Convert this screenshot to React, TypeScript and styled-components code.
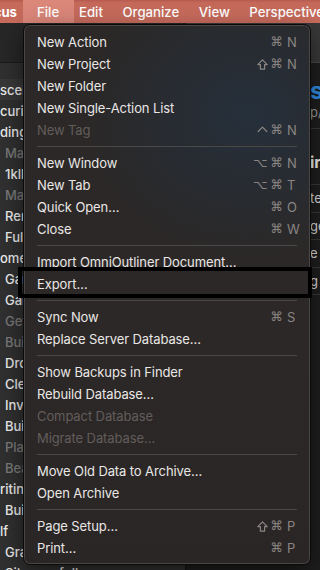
import React from "react";
import styled, { createGlobalStyle } from "styled-components";

const Global = createGlobalStyle`
  html, body { margin: 0; padding: 0; background: #1d1d1d; }
  body { width: 320px; height: 570px; overflow: hidden; }
  * { box-sizing: border-box; }
`;

const Screen = styled.div`
  position: relative;
  width: 320px;
  height: 570px;
  overflow: hidden;
  display: flex;
  flex-direction: column;
  font-family: Inter, "Liberation Sans", sans-serif;
  -webkit-font-smoothing: antialiased;
`;

const MenuBar = styled.div`
  height: 23px;
  flex: none;
  display: flex;
  align-items: center;
  background: linear-gradient(#b65a4f 0px, #c56a5b 3px, #c86c5d 100%);
  color: #fff;
  font-size: 13.2px;
  font-weight: 500;
`;

const AppName = styled.div`
  flex: none;
  width: 17px;
  height: 100%;
  display: flex;
  align-items: center;
  justify-content: flex-end;
  overflow: hidden;
  font-weight: 700;
  white-space: nowrap;
`;

const BarItem = styled.div<{ $active?: boolean; $first?: boolean }>`
  flex: none;
  height: 100%;
  display: flex;
  align-items: center;
  white-space: nowrap;
  margin-left: ${(p) => (p.$active ? 6 : p.$first ? 5 : 19.5)}px;
  ${(p) =>
    p.$active &&
    `background: #db877a; width: 51px; padding-left: 14px;`}
`;

const Window = styled.div`
  flex: 1;
  display: flex;
  min-height: 0;
`;

const Sidebar = styled.div`
  width: 186px;
  flex: none;
  display: flex;
  flex-direction: column;
  background: #303030;
  border-right: 1px solid #111;
`;

const SideToolbar = styled.div`
  height: 40px;
  flex: none;
  background: #272727;
  border-bottom: 1px solid #1a1a1a;
`;

const SideList = styled.div`
  padding-top: 16px;
  display: flex;
  flex-direction: column;
`;

const SideRow = styled.div<{ $indent: number; $dim?: boolean; $sel?: boolean }>`
  height: 21px;
  display: flex;
  align-items: center;
  padding-left: ${(p) => p.$indent}px;
  font-size: 13px;
  font-weight: 500;
  white-space: nowrap;
  color: ${(p) => (p.$dim ? "#7a7a7a" : "#ececec")};
  background: ${(p) => (p.$sel ? "#383838" : "transparent")};
`;

const Content = styled.div`
  flex: 1;
  display: flex;
  flex-direction: column;
  background: #1e1e1e;
  overflow: hidden;
  padding-left: 124px;
`;

const ContentToolbar = styled.div`
  height: 40px;
  flex: none;
  margin-left: -124px;
  background: #393939;
  border-bottom: 1px solid #4a4a4a;
`;

const TitleBlock = styled.div`
  padding: 14px 0 8px;
  border-bottom: 1px solid #3a3a3a;
  white-space: nowrap;
`;

const Title = styled.div`
  font-size: 24px;
  font-weight: 700;
  line-height: 27px;
  color: #2f8fe6;
`;

const Subtitle = styled.div`
  font-size: 13px;
  line-height: 16px;
  color: #9b9b9b;
`;

const Heading = styled.div`
  padding: 23px 0 12px;
  font-size: 16px;
  font-weight: 700;
  line-height: 20px;
  color: #f0f0f0;
  border-bottom: 1px solid #3a3a3a;
  white-space: nowrap;
`;

const TaskRow = styled.div`
  height: 27.5px;
  display: flex;
  align-items: center;
  font-size: 13px;
  color: #dcdcdc;
  border-bottom: 1px solid #383838;
  white-space: nowrap;
`;

const Menu = styled.div`
  position: absolute;
  left: 23px;
  top: 24px;
  width: 288px;
  padding: 6px 0 5px;
  border-radius: 7px;
  border: 1px solid #0b0a0a;
  box-shadow: inset 0 0 0 1px #4a4644, 0 8px 24px rgba(0, 0, 0, 0.5);
  background:
    radial-gradient(ellipse 170px 150px at 225px 90px, rgba(35, 50, 66, 0.75), rgba(35, 50, 66, 0) 100%),
    linear-gradient(180deg, #2b2827 0%, #2c2827 60%, #2a2625 100%);
  display: flex;
  flex-direction: column;
`;

const Item = styled.div<{ $disabled?: boolean }>`
  height: 22px;
  display: flex;
  align-items: center;
  padding: 0 0 0 13px;
  font-size: 13px;
  letter-spacing: -0.1px;
  color: ${(p) => (p.$disabled ? "#625d5b" : "#e9e7e5")};
  white-space: nowrap;
`;

const Label = styled.span`
  flex: 1;
`;

const Shortcut = styled.span`
  display: flex;
  align-items: center;
  color: #8a8583;
`;

const Mods = styled.span`
  display: flex;
  align-items: center;
  gap: 3px;
  margin-right: 4px;
  font-family: "DejaVu Sans", sans-serif;
  font-size: 12.5px;
`;

const ModGlyph = styled.span`
  display: inline-block;
  line-height: 1;
`;

const ModSvg = styled.svg`
  display: block;
  width: 11px;
  height: 11px;
  fill: none;
  stroke: currentColor;
  stroke-width: 1.2;
  stroke-linejoin: round;
  stroke-linecap: round;
`;

const Key = styled.span`
  width: 23px;
  font-size: 13px;
`;

const Separator = styled.div`
  height: 11px;
  display: flex;
  align-items: center;
  padding: 0 13px 0 13px;
  &::after {
    content: "";
    flex: 1;
    height: 1px;
    background: #4b4745;
  }
`;

const FocusBox = styled.div`
  position: absolute;
  left: 18px;
  top: 267px;
  width: 294px;
  height: 31px;
  border: 4px solid #000;
`;

type Mod = "shift" | "ctrl" | "opt" | "cmd";

type Entry =
  | { sep: true }
  | { label: string; mods?: Mod[]; key?: string; disabled?: boolean };

const entries: Entry[] = [
  { label: "New Action", mods: ["cmd"], key: "N" },
  { label: "New Project", mods: ["shift", "cmd"], key: "N" },
  { label: "New Folder" },
  { label: "New Single-Action List" },
  { label: "New Tag", mods: ["ctrl", "cmd"], key: "N", disabled: true },
  { sep: true },
  { label: "New Window", mods: ["opt", "cmd"], key: "N" },
  { label: "New Tab", mods: ["opt", "cmd"], key: "T" },
  { label: "Quick Open…", mods: ["cmd"], key: "O" },
  { label: "Close", mods: ["cmd"], key: "W" },
  { sep: true },
  { label: "Import OmniOutliner Document…" },
  { label: "Export…" },
  { sep: true },
  { label: "Sync Now", mods: ["cmd"], key: "S" },
  { label: "Replace Server Database…" },
  { sep: true },
  { label: "Show Backups in Finder" },
  { label: "Rebuild Database…" },
  { label: "Compact Database", disabled: true },
  { label: "Migrate Database…", disabled: true },
  { sep: true },
  { label: "Move Old Data to Archive…" },
  { label: "Open Archive" },
  { sep: true },
  { label: "Page Setup…", mods: ["shift", "cmd"], key: "P" },
  { label: "Print…", mods: ["cmd"], key: "P" },
];

function ModIcon({ m }: { m: Mod }) {
  if (m === "shift")
    return (
      <ModSvg viewBox="0 0 11 11">
        <path d="M5.5 0.8 L10.2 5.6 L7.6 5.6 L7.6 10.2 L3.4 10.2 L3.4 5.6 L0.8 5.6 Z" />
      </ModSvg>
    );
  if (m === "ctrl")
    return (
      <ModSvg viewBox="0 0 11 11">
        <path d="M1.2 6.5 L5.5 2.2 L9.8 6.5" />
      </ModSvg>
    );
  return <ModGlyph>{m === "opt" ? "⌥" : "⌘"}</ModGlyph>;
}

const sideRows: { t: string; i: number; dim?: boolean; sel?: boolean }[] = [
  { t: "scellaneous", i: 0, sel: true },
  { t: "curity", i: 0 },
  { t: "ding", i: 0 },
  { t: "Maintenance", i: 5, dim: true },
  { t: "1kll notes", i: 5 },
  { t: "Make list", i: 5, dim: true },
  { t: "Renew", i: 5 },
  { t: "Full backup", i: 5 },
  { t: "ome", i: 0 },
  { t: "Garden", i: 5 },
  { t: "Garage", i: 5 },
  { t: "Get quotes", i: 5, dim: true },
  { t: "Build shed", i: 5, dim: true },
  { t: "Drop off", i: 5 },
  { t: "Clean", i: 5 },
  { t: "Invoice", i: 5 },
  { t: "Build", i: 5 },
  { t: "Plan trip", i: 5, dim: true },
  { t: "Beach", i: 5, dim: true },
  { t: "riting", i: 0 },
  { t: "Build outline", i: 5 },
  { t: "lf", i: 0 },
  { t: "Grass", i: 5 },
  { t: "Sitemap full", i: 5 },
];

const taskRows = ["te", "ge", "e", "g"];

export default function App() {
  return (
    <Screen>
      <Global />
      <MenuBar>
        <AppName>OmniFocus</AppName>
        <BarItem $active>File</BarItem>
        <BarItem $first>Edit</BarItem>
        <BarItem>Organize</BarItem>
        <BarItem>View</BarItem>
        <BarItem>Perspectives</BarItem>
      </MenuBar>
      <Window>
        <Sidebar>
          <SideToolbar />
          <SideList>
            {sideRows.map((r, idx) => (
              <SideRow key={idx} $indent={r.i} $dim={r.dim} $sel={r.sel}>
                {r.t}
              </SideRow>
            ))}
          </SideList>
        </Sidebar>
        <Content>
          <ContentToolbar />
          <TitleBlock>
            <Title>s</Title>
            <Subtitle>p/</Subtitle>
          </TitleBlock>
          <Heading>ir</Heading>
          {taskRows.map((t) => (
            <TaskRow key={t}>{t}</TaskRow>
          ))}
        </Content>
      </Window>
      <Menu>
        {entries.map((e, idx) =>
          "sep" in e ? (
            <Separator key={idx} />
          ) : (
            <Item key={idx} $disabled={e.disabled}>
              <Label>{e.label}</Label>
              {e.key && (
                <Shortcut>
                  <Mods>
                    {e.mods?.map((m) => (
                      <ModIcon key={m} m={m} />
                    ))}
                  </Mods>
                  <Key>{e.key}</Key>
                </Shortcut>
              )}
            </Item>
          )
        )}
      </Menu>
      <FocusBox />
    </Screen>
  );
}
